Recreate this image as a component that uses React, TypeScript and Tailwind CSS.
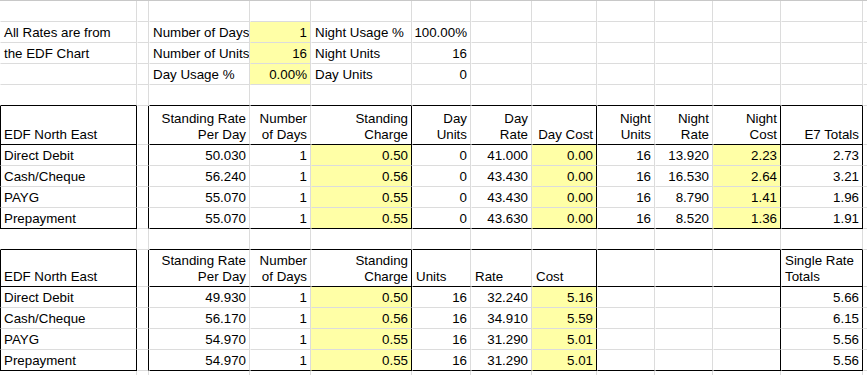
import React from "react";

type Align = "l" | "r";
type C = {
  t?: React.ReactNode;
  a?: Align;
  y?: boolean; // yellow
  rb?: boolean; // right border black
  bb?: boolean; // bottom border black
  lb?: boolean; // left border black
};

const COLS = 13;

function Cell({ c, h }: { c: C; h: string }) {
  const cls = [
    "flex items-end overflow-hidden whitespace-nowrap border-r border-b border-l px-[3px] pb-[1px] leading-[16px]",
    c.rb ? "border-r-black" : "border-r-[#dcdcdc]",
    c.bb ? "border-b-black" : "border-b-[#dcdcdc]",
    c.lb ? "border-l-black" : "border-l-transparent",
    c.y ? "bg-[#ffffa6]" : "bg-white",
    c.a === "r" ? "justify-end text-right" : "justify-start text-left",
    h,
  ].join(" ");
  return (
    <div className={cls}>
      <div>{c.t}</div>
    </div>
  );
}

const two = (a: string, b: string) => (
  <>
    {a}
    <br />
    {b}
  </>
);

function emptyRow(): C[] {
  return Array.from({ length: COLS }, () => ({}));
}

// rows where the bottom line is the top of a box
function topOfBox(): C[] {
  return Array.from({ length: COLS }, (_, i) => ({ bb: i !== 1 && i !== 12 }));
}

function tableRow(
  cells: (C | undefined)[],
  opts: { bottom?: boolean }
): C[] {
  // columns: 0 A,1 B,2 C,3 D,4 E,5 F,6 G,7 H,8 I,9 J,10 K,11 L,12 rest
  const row: C[] = [];
  for (let i = 0; i < COLS; i++) {
    const base: C = { ...(cells[i] || {}) };
    if (i === 0) {
      base.lb = true;
      base.rb = true;
    }
    if (i === 1) base.rb = true;
    if (i === 4 || i === 7 || i === 10 || i === 11) base.rb = true;
    if (opts.bottom && i !== 1 && i !== 12) base.bb = true;
    row.push(base);
  }
  return row;
}

const R = (t: string, y?: boolean): C => ({ t, a: "r", y });
const L = (t: React.ReactNode): C => ({ t, a: "l" });

const t1data = [
  ["Direct Debit", "50.030", "1", "0.50", "0", "41.000", "0.00", "16", "13.920", "2.23", "2.73"],
  ["Cash/Cheque", "56.240", "1", "0.56", "0", "43.430", "0.00", "16", "16.530", "2.64", "3.21"],
  ["PAYG", "55.070", "1", "0.55", "0", "43.430", "0.00", "16", "8.790", "1.41", "1.96"],
  ["Prepayment", "55.070", "1", "0.55", "0", "43.630", "0.00", "16", "8.520", "1.36", "1.91"],
];

const t2data = [
  ["Direct Debit", "49.930", "1", "0.50", "16", "32.240", "5.16", "5.66"],
  ["Cash/Cheque", "56.170", "1", "0.56", "16", "34.910", "5.59", "6.15"],
  ["PAYG", "54.970", "1", "0.55", "16", "31.290", "5.01", "5.56"],
  ["Prepayment", "54.970", "1", "0.55", "16", "31.290", "5.01", "5.56"],
];

export default function App() {
  const rows: { cells: C[]; h: string }[] = [];
  const H21 = "h-[21px]";

  rows.push({ cells: emptyRow(), h: H21 });
  {
    const r = emptyRow();
    r[0] = L("All Rates are from");
    r[2] = L("Number of Days");
    r[3] = R("1", true);
    r[4] = L("Night Usage %");
    r[5] = R("100.00%");
    rows.push({ cells: r, h: H21 });
  }
  {
    const r = emptyRow();
    r[0] = L("the EDF Chart");
    r[2] = L("Number of Units");
    r[3] = R("16", true);
    r[4] = L("Night Units");
    r[5] = R("16");
    rows.push({ cells: r, h: H21 });
  }
  {
    const r = emptyRow();
    r[2] = L("Day Usage %");
    r[3] = R("0.00%", true);
    r[4] = L("Day Units");
    r[5] = R("0");
    rows.push({ cells: r, h: H21 });
  }
  rows.push({ cells: topOfBox(), h: H21 });

  // table 1 header
  rows.push({
    cells: tableRow(
      [
        L("EDF North East"),
        undefined,
        R("") && { t: two("Standing Rate", "Per Day"), a: "r" },
        { t: two("Number", "of Days"), a: "r" },
        { t: two("Standing", "Charge"), a: "r" },
        { t: two("Day", "Units"), a: "r" },
        { t: two("Day", "Rate"), a: "r" },
        R("Day Cost"),
        { t: two("Night", "Units"), a: "r" },
        { t: two("Night", "Rate"), a: "r" },
        { t: two("Night", "Cost"), a: "r" },
        R("E7 Totals"),
      ],
      { bottom: true }
    ),
    h: "h-[39px]",
  });
  t1data.forEach((d, idx) => {
    rows.push({
      cells: tableRow(
        [
          L(d[0]),
          undefined,
          R(d[1]),
          R(d[2]),
          R(d[3], true),
          R(d[4]),
          R(d[5]),
          R(d[6], true),
          R(d[7]),
          R(d[8]),
          R(d[9], true),
          R(d[10]),
        ],
        { bottom: idx === t1data.length - 1 }
      ),
      h: H21,
    });
  });
  rows.push({ cells: topOfBox(), h: H21 });

  // table 2 header
  rows.push({
    cells: tableRow(
      [
        L("EDF North East"),
        undefined,
        { t: two("Standing Rate", "Per Day"), a: "r" },
        { t: two("Number", "of Days"), a: "r" },
        { t: two("Standing", "Charge"), a: "r" },
        L("Units"),
        L("Rate"),
        L("Cost"),
        {},
        {},
        {},
        { t: two("Single Rate", "Totals"), a: "l" },
      ],
      { bottom: true }
    ),
    h: "h-[37px]",
  });
  t2data.forEach((d, idx) => {
    rows.push({
      cells: tableRow(
        [
          L(d[0]),
          undefined,
          R(d[1]),
          R(d[2]),
          R(d[3], true),
          R(d[4]),
          R(d[5]),
          R(d[6], true),
          {},
          {},
          {},
          R(d[7]),
        ],
        { bottom: idx === t2data.length - 1 }
      ),
      h: H21,
    });
  });
  rows.push({ cells: emptyRow(), h: H21 });

  return (
    <div
      className="h-[375px] w-[867px] overflow-hidden border-t border-t-[#c8c8c8] bg-white text-[13.33px] text-black"
      style={{ fontFamily: '"Liberation Sans", Arial, sans-serif' }}
    >
      <div className="grid grid-cols-[137px_12px_101px_61px_101px_59px_61px_65px_58px_58px_68px_82px_20px]">
        {rows.map((row, ri) =>
          row.cells.map((c, ci) => <Cell key={`${ri}-${ci}`} c={c} h={row.h} />)
        )}
      </div>
    </div>
  );
}
